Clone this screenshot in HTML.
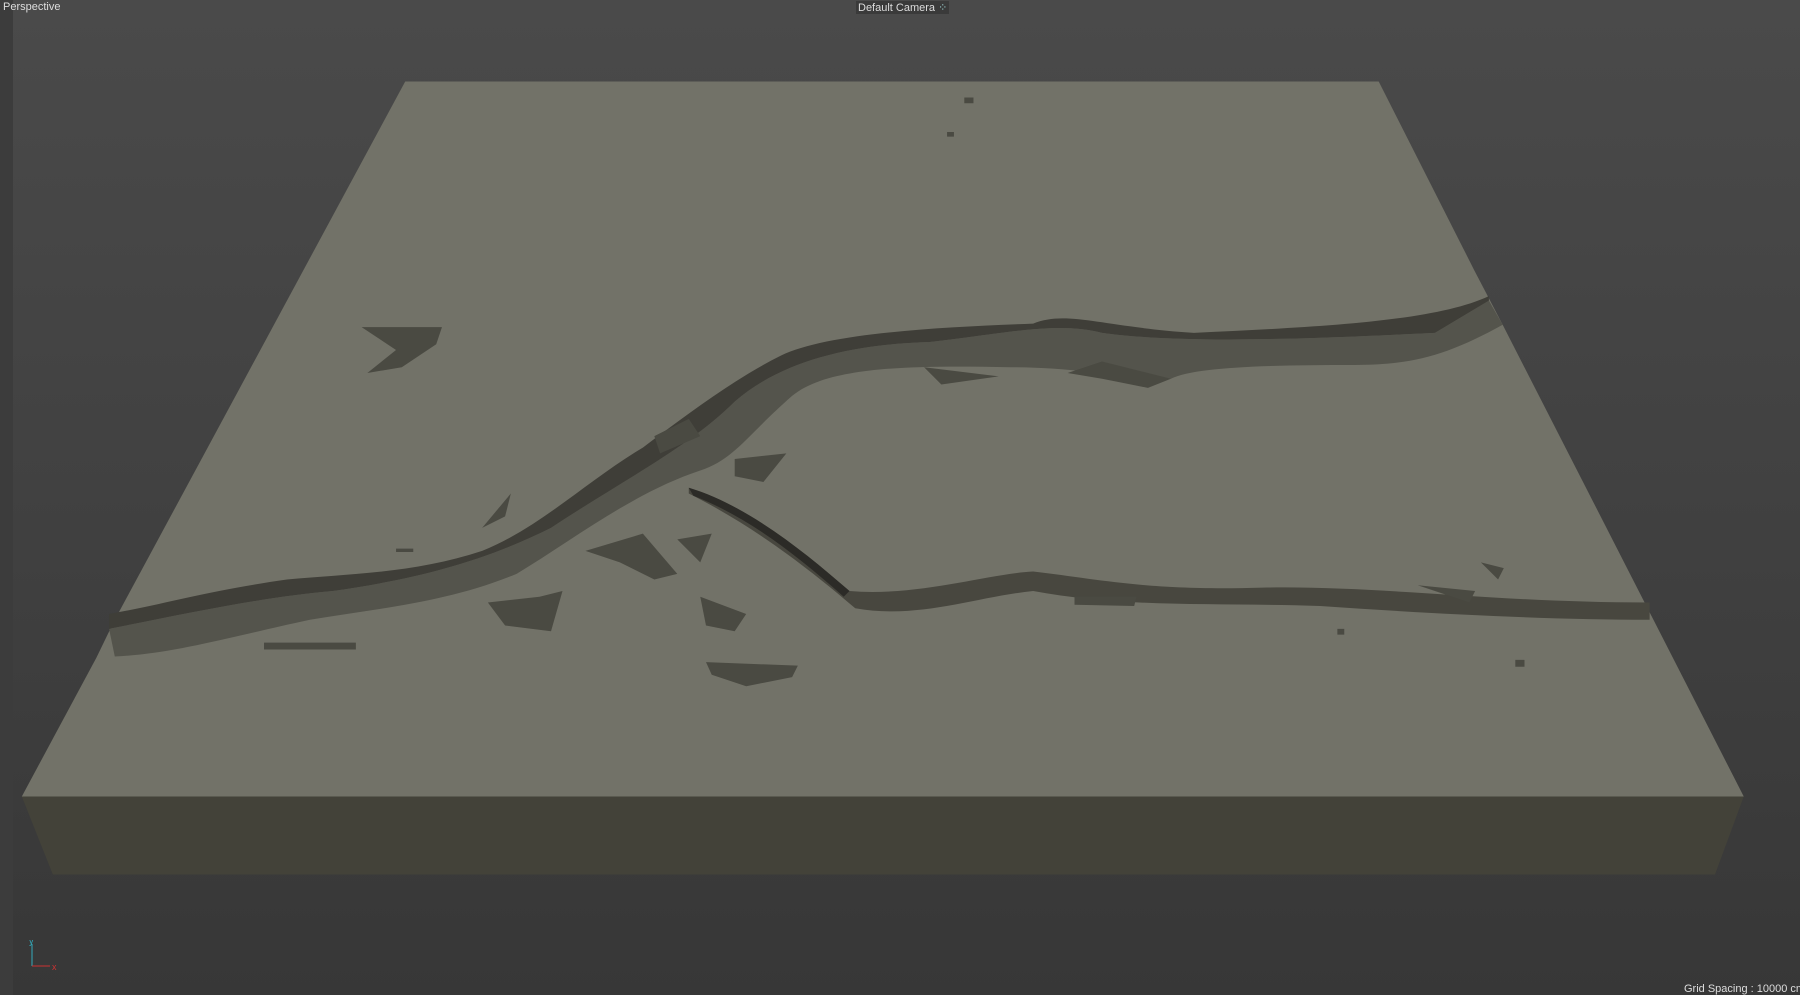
<!DOCTYPE html>
<html><head><style>
html,body{margin:0;padding:0;width:1800px;height:995px;overflow:hidden;background:linear-gradient(#4a4a4a,#3f3f3f 60%,#373737);font-family:"Liberation Sans",sans-serif;}
.t{position:absolute;color:#ddd;font-size:11px;}
</style></head><body>
<div style="position:absolute;left:0;top:0;width:13px;height:995px;background:#3c3c3c"></div>
<svg width="1800" height="995" viewBox="0 0 1568 867" preserveAspectRatio="none" style="position:absolute;left:0;top:0">
<polygon points="19,694 1519,694 1494,762 46,762" fill="#434239"/>
<polygon points="353,71 1201,71 1284,235 1296,258 1309,283 1519,694 19,694 84,573 100,540" fill="#727268"/>
<!-- main river -->
<path d="M95,548 C160,535 230,520 290,515 C360,505 420,490 480,460 C540,420 600,390 640,350 C680,315 740,300 810,298 C880,290 920,280 960,290 C1030,300 1150,295 1250,290 L1297,262 L1309,283 C1260,310 1230,318 1180,318 C1100,318 1040,320 1020,330 C980,330 940,320 880,320 C790,318 720,320 690,345 C650,380 640,400 610,410 C550,430 500,470 450,500 C390,525 330,530 270,540 C200,555 150,570 100,572 Z" fill="#54544c"/>
<path d="M95,548 C160,535 230,520 290,515 C360,505 420,490 480,460 C540,420 600,390 640,350 C680,315 740,300 810,298 C880,290 920,280 960,290 C1030,300 1150,295 1250,290 L1297,262 L1297,258 C1250,280 1150,285 1040,290 C960,285 930,270 900,282 C820,285 720,290 680,310 C640,330 600,360 560,390 C510,420 470,460 420,480 C360,500 300,500 250,505 C180,515 150,525 95,535 Z" fill="#3f3e38"/>
<!-- south river -->
<path d="M600,425 C650,440 700,480 740,515 C800,520 860,500 900,498 C960,505 1000,515 1100,512 C1200,510 1300,525 1437,525 L1437,540 C1350,540 1250,535 1150,528 C1060,525 980,530 900,515 C850,520 800,540 745,530 C710,500 660,460 600,430 Z" fill="#48473f"/>
<path d="M600,425 C650,440 700,480 740,515 L735,520 C690,480 650,450 604,432 Z" fill="#2c2b27"/>
<g fill="#4a4a42">
<path d="M315,285 L385,285 L380,300 L350,320 L320,325 L345,305 Z"/>
<path d="M420,460 L445,430 L440,450 Z"/>
<path d="M510,480 L560,465 L590,500 L570,505 L540,490 Z"/>
<path d="M590,470 L620,465 L610,490 Z"/>
<path d="M425,525 L470,520 L490,515 L480,550 L440,545 Z"/>
<path d="M610,520 L650,535 L640,550 L615,545 Z"/>
<path d="M615,577 L695,580 L690,590 L650,598 L620,588 Z"/>
<path d="M570,380 L600,365 L610,380 L575,395 Z"/>
<path d="M640,400 L685,395 L665,420 L640,415 Z"/>
<path d="M805,320 L870,328 L820,335 Z"/>
<path d="M930,325 L960,315 L1020,330 L1000,338 L960,330 Z"/>
<path d="M936,520 L990,520 L988,528 L936,527 Z"/>
<path d="M1235,510 L1285,515 L1280,525 Z"/>
<path d="M1290,490 L1310,495 L1305,505 Z"/>
<path d="M840,85 h8 v5 h-8z M825,115 h6v4h-6z M1320,575 h8v6h-8z M1165,548 h6v5h-6z M345,478 h15v3h-15z M230,560 h80v6h-80z"/>
</g>
</svg>
<div class="t" style="left:3px;top:1px">Perspective</div>
<div class="t" style="left:856px;top:1px;background:#3a3a3a;padding:0 2px">Default Camera <span style="color:#9cc">⁘</span></div>
<div class="t" style="right:0;bottom:0;white-space:nowrap;left:1684px">Grid Spacing : 10000 cm</div>
<svg width="40" height="40" style="position:absolute;left:24px;top:940px">
<line x1="8" y1="4" x2="8" y2="26" stroke="#3ab" stroke-width="1"/>
<line x1="8" y1="26" x2="26" y2="26" stroke="#c33" stroke-width="1"/>
<text x="5" y="4" fill="#3ab" font-size="9" font-family="Liberation Sans">y</text>
<text x="28" y="30" fill="#c33" font-size="9" font-family="Liberation Sans">x</text>
</svg>
</body></html>
